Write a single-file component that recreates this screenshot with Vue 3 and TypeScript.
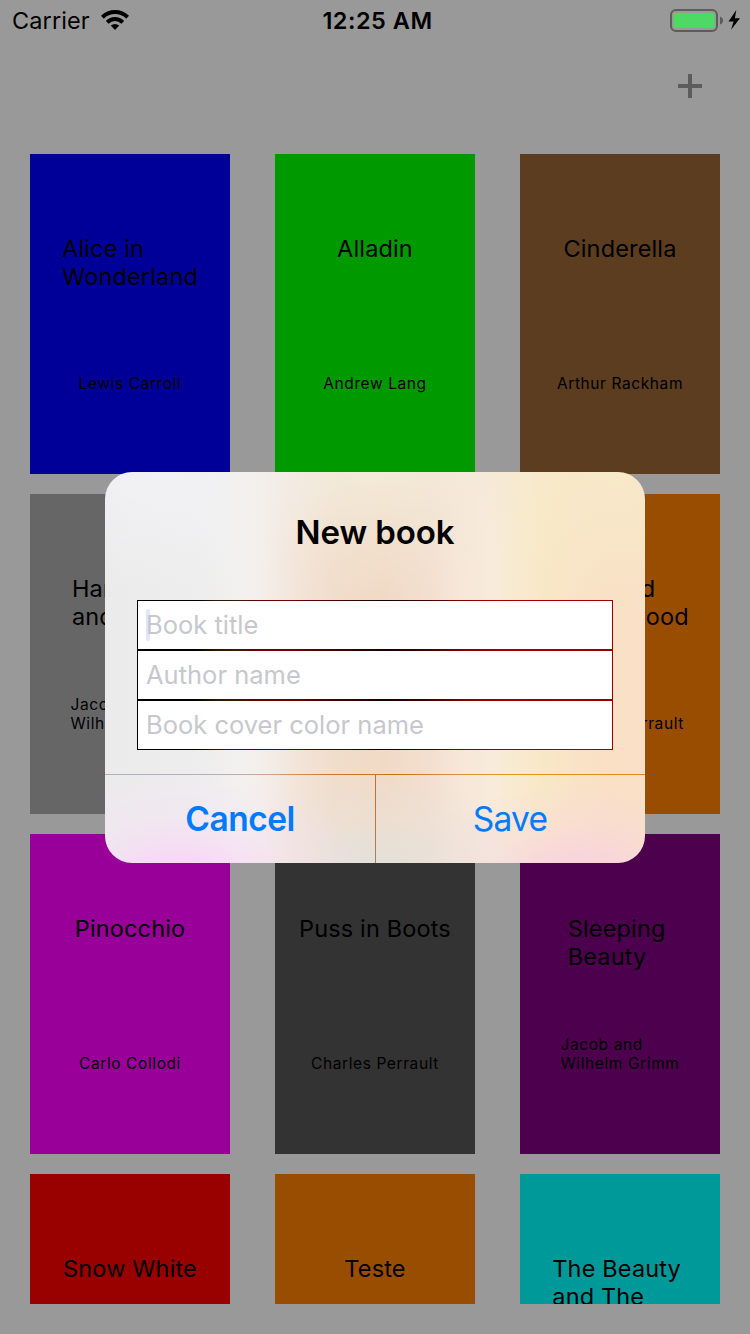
<script setup lang="ts">
interface Book {
  title: string[]
  author: string[]
  color: string
}

const books: Book[] = [
  { title: ['Alice in', 'Wonderland'], author: ['Lewis Carroll'], color: '#000099' },
  { title: ['Alladin'], author: ['Andrew Lang'], color: '#009900' },
  { title: ['Cinderella'], author: ['Arthur Rackham'], color: '#5c3d1f' },
  { title: ['Hansel', 'and Gretel'], author: ['Jacob and', 'Wilhelm Grimm'], color: '#666666' },
  { title: ['Peter Pan'], author: ['J. M. Barrie'], color: '#990000' },
  { title: ['Little Red', 'Riding Hood'], author: ['Charles Perrault'], color: '#994d00' },
  { title: ['Pinocchio'], author: ['Carlo Collodi'], color: '#990099' },
  { title: ['Puss in Boots'], author: ['Charles Perrault'], color: '#333333' },
  { title: ['Sleeping\u00a0', 'Beauty'], author: ['Jacob and', 'Wilhelm Grimm'], color: '#4d004d' },
  { title: ['Snow White'], author: [], color: '#990000' },
  { title: ['Teste'], author: [], color: '#994d00' },
  { title: ['The Beauty\u00a0', 'and The'], author: [], color: '#009999' },
]

const fields: string[] = ['Book title', 'Author name', 'Book cover color name']
</script>

<template>
  <div class="screen">
    <header class="status">
      <div class="carrier">
        <span>Carrier</span>
        <svg class="wifi" width="28" height="21" viewBox="0 0 28 21">
          <path d="M1.4 7.2A18 18 0 0 1 26.6 7.2" fill="none" stroke="#000" stroke-width="4" />
          <path d="M6.2 12.3A11.1 11.1 0 0 1 21.8 12.3" fill="none" stroke="#000" stroke-width="4" />
          <path d="M9.8 15.6A6.4 6.4 0 0 1 18.2 15.6L14 20Z" fill="#000" />
        </svg>
      </div>
      <span class="clock">12:25 AM</span>
      <svg class="battery" width="72" height="24" viewBox="0 0 72 24">
        <rect x="2" y="2" width="46" height="21" rx="5" fill="none" stroke="#5c5c5c" stroke-width="2" />
        <rect x="4.5" y="5" width="41" height="15" rx="2" fill="#4cd964" />
        <path d="M51 8.5Q54 9.5 54 12.5T51 16.5Z" fill="#5c5c5c" />
        <path d="M67.3 2L59.5 13.6H64.6L62 21.8L71 10.3H65.9Z" fill="#000" />
      </svg>
    </header>

    <nav class="toolbar">
      <svg class="plus" width="24" height="24" viewBox="0 0 24 24">
        <path d="M12 0V24M0 12H24" stroke="#5c5c5c" stroke-width="4" />
      </svg>
    </nav>

    <main class="shelf">
      <article v-for="(book, i) in books" :key="i" class="book" :style="{ backgroundColor: book.color }">
        <h2 class="title"><span v-for="line in book.title" :key="line">{{ line }}</span></h2>
        <p class="author"><span v-for="line in book.author" :key="line">{{ line }}</span></p>
      </article>
    </main>

    <section class="alert">
      <h1 class="heading">New book</h1>
      <div class="fields">
        <div v-for="(field, i) in fields" :key="field" class="field">
          <i v-if="i === 0" class="caret"></i>
          <span class="placeholder">{{ field }}</span>
        </div>
      </div>
      <div class="actions">
        <button class="action cancel"><span>Cancel</span></button>
        <button class="action save"><span>Save</span></button>
      </div>
    </section>
  </div>
</template>

<style>
body {
  margin: 0;
  background: #999;
}
</style>

<style scoped>
.screen {
  position: relative;
  width: 750px;
  height: 1334px;
  overflow: hidden;
  background: #999;
  color: #000;
  font-family: Inter, "Liberation Sans", sans-serif;
}

.status {
  display: grid;
  grid-template-columns: 1fr auto 1fr;
  align-items: start;
  height: 40px;
  font-size: 23.5px;
  line-height: 42px;
}

.carrier {
  display: flex;
  gap: 11px;
  padding-left: 12px;
  letter-spacing: 0.1px;
}

.wifi {
  margin-top: 10px;
}

.clock {
  padding-left: 5px;
  font-weight: 600;
  letter-spacing: 0.5px;
}

.battery {
  justify-self: end;
  margin: 8px 9px 0 0;
}

.toolbar {
  display: flex;
  justify-content: flex-end;
  align-items: center;
  height: 92px;
  padding-right: 48px;
  box-sizing: border-box;
}

.shelf {
  display: grid;
  grid-template-columns: repeat(3, 200px);
  grid-auto-rows: 320px;
  gap: 20px 45px;
  height: 1150px;
  margin: 22px 30px 0;
  overflow: hidden;
}

.book {
  display: flex;
  flex-direction: column;
  justify-content: space-between;
  align-items: center;
  box-sizing: border-box;
  padding: 81px 0;
}

.title,
.author {
  display: flex;
  flex-direction: column;
  margin: 0;
  font-weight: 400;
  white-space: nowrap;
}

.title {
  font-size: 23.5px;
  line-height: 28px;
  letter-spacing: 0.15px;
}

.author {
  font-size: 15.5px;
  line-height: 19px;
  letter-spacing: 0.6px;
}

.alert {
  position: absolute;
  left: 105px;
  top: 472px;
  width: 540px;
  height: 391px;
  border-radius: 27px;
  overflow: hidden;
  background:
    radial-gradient(ellipse 190px 100px at 75px 400px, rgba(250, 209, 248, 0.9), rgba(248, 225, 246, 0.4) 55%, rgba(246, 236, 244, 0)),
    radial-gradient(ellipse 150px 110px at 270px 405px, rgba(222, 226, 222, 0.9), rgba(230, 226, 220, 0.5) 50%, rgba(235, 225, 215, 0)),
    radial-gradient(ellipse 160px 95px at 470px 405px, rgba(248, 205, 230, 0.9), rgba(248, 214, 224, 0.4) 55%, rgba(248, 220, 218, 0)),
    radial-gradient(ellipse 190px 130px at 60px -10px, rgba(243, 243, 247, 0.9), rgba(241, 241, 244, 0)),
    radial-gradient(ellipse 190px 140px at 270px -20px, rgba(243, 239, 220, 0.9), rgba(242, 233, 216, 0.5) 55%, rgba(242, 228, 210, 0)),
    radial-gradient(ellipse 150px 150px at 510px -10px, rgba(247, 235, 202, 0.9), rgba(247, 230, 198, 0)),
    linear-gradient(90deg, #ebebeb 0, #ededed 90px, #f2f1ef 135px, #f4eee9 160px, #f3e5da 190px, #f1ddcb 230px, #f1dac5 280px, #f3dfd0 325px, #f6e6d7 350px, #f8ebdc 385px, #f8ebd2 405px, #f8e8c7 435px, #f9e3c6 470px, #f9e0c5 500px, #f9e0c6 540px);
}

.heading {
  margin: 0;
  padding-top: 40px;
  font-size: 33px;
  font-weight: 600;
  line-height: 40px;
  letter-spacing: -0.1px;
  text-align: center;
}

.fields {
  display: grid;
  grid-template-rows: repeat(3, 48px);
  gap: 2px;
  margin: 48px 32px 24px;
  padding: 1px;
  background: linear-gradient(90deg, #000 0, #000 58px, #2a1900 80px, #3c1c00 102px, #650000 115px, #700000 155px, #380000 215px, #160000 248px, #440000 290px, #860000 330px, #a00000 370px, #960000 476px);
}

.field {
  position: relative;
  display: flex;
  align-items: center;
  padding-left: 8px;
  background: #fff;
}

.caret {
  position: absolute;
  left: 8px;
  top: 8px;
  width: 4px;
  height: 32px;
  border-radius: 2px;
  background: #dfe6ff;
}

.placeholder {
  position: relative;
  color: #c7c7cd;
  font-size: 25.5px;
  line-height: 48px;
  white-space: nowrap;
}

.actions {
  display: grid;
  grid-template-columns: 270px 1fr;
  height: 89px;
  background:
    linear-gradient(90deg, #bcaac4 0, #bcaabd 110px, #cba894 160px, #cc7a35 220px, #c66f1c 290px, #d5924a 350px, #dc9d1b 400px, #dc8a1c 540px) top / 100% 1px no-repeat,
    linear-gradient(#c66f20, #a67f68) 270px 0 / 1px 100% no-repeat;
}

.action {
  padding: 1px 0 0;
  border: 0;
  background: none;
  color: #007aff;
  font-family: inherit;
  font-size: 33.5px;
  line-height: 88px;
}

.cancel {
  font-weight: 600;
  letter-spacing: -0.5px;
}

.save {
  font-weight: 400;
  letter-spacing: -0.8px;
}
</style>
